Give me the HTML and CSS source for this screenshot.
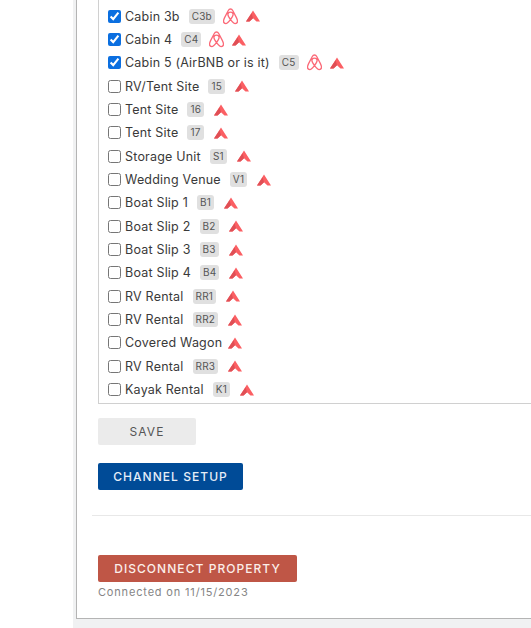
FILE: index.html
```html
<!DOCTYPE html>
<html lang="en">
<head>
<meta charset="utf-8">
<title>Property channels</title>
<link rel="stylesheet" href="styles.css">
</head>
<body>
<svg class="defs" width="0" height="0" aria-hidden="true">
  <symbol id="air" viewBox="0 0 16 18"><path d="M8 12.2C6.4 10 5.2 8.200 5.200 6.800 5.200 5.300 6.400 4.300 8 4.300s2.800 1 2.800 2.500C10.800 8.200 9.600 10 8 12.200ZM8 12.200c1.700 2.200 3.200 4.300 5 4.300 1.600 0 2.500-1.200 2.500-2.600 0-1.100-.5-2.200-1.200-3.700L10.500 2.800C9.800 1.500 9.100 1 8 1S6.200 1.500 5.500 2.800L1.700 10.200C1 11.700.5 12.800.5 13.900c0 1.400.9 2.600 2.500 2.600 1.800 0 3.300-2.100 5-4.300Z" fill="none" stroke="#fb6a78" stroke-width="1.400"/></symbol>
  <symbol id="peak" viewBox="0 0 14 12"><path d="M7 0.500 14 11.500H10.500L7 8.300 3.500 11.500H0Z" fill="#fb5f63"/><path d="M5.600 3.300 7 8.300 3.500 11.500H0Z" fill="#e04f55"/></symbol>
</svg>
<div class="page">
  <main class="card">
    <div class="list">
      <label class="row"><input type="checkbox" checked><span>Cabin 3b</span><b class="tag">C3b</b><svg class="air"><use href="#air"/></svg><svg class="peak"><use href="#peak"/></svg></label>
      <label class="row"><input type="checkbox" checked><span>Cabin 4</span><b class="tag">C4</b><svg class="air"><use href="#air"/></svg><svg class="peak"><use href="#peak"/></svg></label>
      <label class="row"><input type="checkbox" checked><span>Cabin 5 (AirBNB or is it)</span><b class="tag">C5</b><svg class="air"><use href="#air"/></svg><svg class="peak"><use href="#peak"/></svg></label>
      <label class="row"><input type="checkbox"><span>RV/Tent Site</span><b class="tag">15</b><svg class="peak"><use href="#peak"/></svg></label>
      <label class="row"><input type="checkbox"><span>Tent Site</span><b class="tag">16</b><svg class="peak"><use href="#peak"/></svg></label>
      <label class="row"><input type="checkbox"><span>Tent Site</span><b class="tag">17</b><svg class="peak"><use href="#peak"/></svg></label>
      <label class="row"><input type="checkbox"><span>Storage Unit</span><b class="tag">S1</b><svg class="peak"><use href="#peak"/></svg></label>
      <label class="row"><input type="checkbox"><span>Wedding Venue</span><b class="tag">V1</b><svg class="peak"><use href="#peak"/></svg></label>
      <label class="row"><input type="checkbox"><span>Boat Slip 1</span><b class="tag">B1</b><svg class="peak"><use href="#peak"/></svg></label>
      <label class="row"><input type="checkbox"><span>Boat Slip 2</span><b class="tag">B2</b><svg class="peak"><use href="#peak"/></svg></label>
      <label class="row"><input type="checkbox"><span>Boat Slip 3</span><b class="tag">B3</b><svg class="peak"><use href="#peak"/></svg></label>
      <label class="row"><input type="checkbox"><span>Boat Slip 4</span><b class="tag">B4</b><svg class="peak"><use href="#peak"/></svg></label>
      <label class="row"><input type="checkbox"><span>RV Rental</span><b class="tag">RR1</b><svg class="peak"><use href="#peak"/></svg></label>
      <label class="row"><input type="checkbox"><span>RV Rental</span><b class="tag">RR2</b><svg class="peak"><use href="#peak"/></svg></label>
      <label class="row"><input type="checkbox"><span>Covered Wagon</span><svg class="peak lone"><use href="#peak"/></svg></label>
      <label class="row"><input type="checkbox"><span>RV Rental</span><b class="tag">RR3</b><svg class="peak"><use href="#peak"/></svg></label>
      <label class="row"><input type="checkbox"><span>Kayak Rental</span><b class="tag">K1</b><svg class="peak"><use href="#peak"/></svg></label>
    </div>
    <button class="btn save" type="button">SAVE</button>
    <button class="btn channel" type="button">CHANNEL SETUP</button>
    <hr class="rule">
    <button class="btn disconnect" type="button">DISCONNECT PROPERTY</button>
    <p class="note">Connected on 11/15/2023</p>
  </main>
</div>
</body>
</html>
```
FILE: styles.css
```css
html, body {
  margin: 0;
  height: 100%;
  overflow: hidden;
  background: #fff;
}
.defs { position: absolute; }
.page {
  margin-left: 73px;
  height: 628px;
  padding-left: 3px;
  box-sizing: border-box;
  background: #f0f1f2;
  font-family: Inter, "Liberation Sans", sans-serif;
}
.card {
  height: 619px;
  box-sizing: border-box;
  background: #fff;
  border-left: 1px solid #b4b4b4;
  border-bottom: 1px solid #b4b4b4;
  padding-left: 21px;
}
.list {
  height: 404px;
  box-sizing: border-box;
  padding: 4.500px 0 0 9px;
  border-left: 1px solid #d0d0d0;
  border-bottom: 1px solid #d0d0d0;
}
.row {
  display: flex;
  align-items: center;
  height: 23.350px;
  font-size: 12.500px;
  letter-spacing: 0.2px;
  color: #3a3a3a;
  white-space: nowrap;
}
.row input {
  width: 13px;
  height: 13px;
  margin: 0 4px 0 0;
  accent-color: #0b6fe0;
}
.tag {
  margin-left: 9px;
  padding: 1px 3px;
  border-radius: 3px;
  background: #e0e0e0;
  color: #555;
  font-size: 10px;
  font-weight: 400;
  line-height: 13px;
}
.air { width: 15px; height: 17px; margin-left: 8px; }
.peak { width: 14px; height: 12px; margin-left: 10px; }
.air + .peak { margin-left: 8px; }
.peak.lone { margin-left: 6px; }
.btn {
  display: block;
  border: 0;
  border-radius: 2px;
  font-family: inherit;
  font-weight: 500;
  letter-spacing: 1.050px;
  height: 27px;
  padding: 0;
}
.save {
  margin-top: 14px;
  width: 98px;
  background: #ebebeb;
  color: #555;
  font-size: 12px;
  font-weight: 400;
}
.channel {
  margin-top: 18px;
  width: 145px;
  background: #004b97;
  color: #e6eef7;
  font-size: 12px;
}
.rule {
  margin: 25px 0 0 -6px;
  border: 0;
  border-top: 1px solid #e8e8e8;
}
.disconnect {
  margin-top: 39px;
  width: 199px;
  background: #bf5646;
  color: #fbeeea;
  font-size: 12px;
}
.note {
  margin: 3px 0 0;
  font-size: 11px;
  line-height: 14px;
  letter-spacing: 0.830px;
  color: #858585;
}
```
